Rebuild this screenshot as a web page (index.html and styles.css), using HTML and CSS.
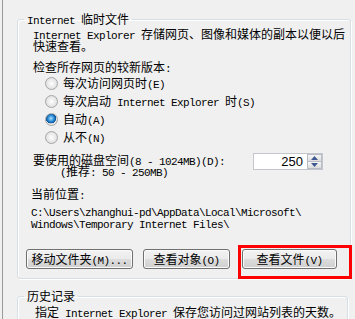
FILE: index.html
```html
<!DOCTYPE html>
<html lang="zh-CN">
<head>
    <meta charset="UTF-8">
    <title>Internet 临时文件</title>
    <link rel="stylesheet" href="styles.css">
</head>
<body>
<div class="window">

    <fieldset class="group group-cache">
        <legend><span class="en">Internet </span>临时文件</legend>

        <p class="desc"><span class="en">Internet Explorer </span>存储网页、图像和媒体的副本以便以后快速查看。</p>

        <p class="check-label">检查所存网页的较新版本<span class="en">:</span></p>

        <div class="radio-list">
            <label class="radio-row"><input type="radio" name="check"><span>每次访问网页时<span class="en">(E)</span></span></label>
            <label class="radio-row"><input type="radio" name="check"><span>每次启动<span class="en"> Internet Explorer </span>时<span class="en">(S)</span></span></label>
            <label class="radio-row"><input type="radio" name="check" checked><span>自动<span class="en">(A)</span></span></label>
            <label class="radio-row"><input type="radio" name="check"><span>从不<span class="en">(N)</span></span></label>
        </div>

        <div class="disk-row">
            <div class="disk-label">
                <div>要使用的磁盘空间<span class="en">(8 - 1024MB)(D):</span></div>
                <div class="disk-hint"><span class="en">(</span>推荐<span class="en">: 50 - 250MB)</span></div>
            </div>
            <div class="spin">
                <span class="spin-value">250</span>
                <div class="spin-btns">
                    <span class="spin-btn"><svg width="7" height="4" viewBox="0 0 7 4"><path d="M0 4 L3.5 0 L7 4 Z" fill="#3d5a95"/></svg></span>
                    <span class="spin-btn"><svg width="7" height="4" viewBox="0 0 7 4"><path d="M0 0 L7 0 L3.5 4 Z" fill="#3d5a95"/></svg></span>
                </div>
            </div>
        </div>

        <p class="location-label">当前位置<span class="en">:</span></p>
        <p class="location-path"><span class="en">C:\Users\zhanghui-pd\AppData\Local\Microsoft\<br>Windows\Temporary Internet Files\</span></p>

        <div class="button-row">
            <button class="win-btn btn-move">移动文件夹<span class="en">(M)...</span></button>
            <button class="win-btn btn-objects">查看对象<span class="en">(O)</span></button>
            <span class="highlight">
                <button class="win-btn btn-files">查看文件<span class="en">(V)</span></button>
            </span>
        </div>
    </fieldset>

    <fieldset class="group group-history">
        <legend>历史记录</legend>
        <p class="desc">指定<span class="en"> Internet Explorer </span>保存您访问过网站列表的天数。</p>
    </fieldset>

</div>
</body>
</html>
```

FILE: styles.css
```css
html, body {
    margin: 0;
    background-color: #f0f0f0;
}

body {
    width: 355px;
    height: 319px;
    overflow: hidden;
    padding-left: 2px;
    box-sizing: border-box;
    font-family: "Noto Sans CJK SC", "Liberation Sans", sans-serif;
    font-size: 12px;
    line-height: 12px;
    color: #000000;
}

p {
    margin: 0;
}

/* latin runs are half width, like the dialog font;
   line-height 0 keeps them from stretching the line box */
.en {
    font-family: "Liberation Mono", "DejaVu Sans Mono", monospace;
    font-size: 11px;
    letter-spacing: -0.6px;
    line-height: 0;
}

.window {
    border-left: 1px solid #9a9a9a;
    height: 100%;
    padding: 13px 0 0 14px;
    box-sizing: border-box;
}

/* Group boxes */
.group {
    margin: 0;
    border: 1px solid #d5dfe5;
    border-radius: 3px;
    box-shadow: inset 1px 1px 0 #ffffff, 1px 1px 0 #ffffff;
    padding: 3px 0 9px 6px;
    min-width: 0;
}

.group legend {
    padding: 0 3px;
    line-height: 12px;
}

.group-cache {
    width: 334px;
    box-sizing: border-box;
}

.group-history {
    width: 331px;
    box-sizing: border-box;
    margin-top: 11px;
    padding-top: 4px;
}

.desc {
    margin-left: 9px;
    width: 316px;
}

.group-history .desc {
    margin-left: 11px;
    white-space: nowrap;
}

.check-label {
    margin: 9px 0 0 9px;
}

/* Radios */
.radio-list {
    margin: 1px 0 0 21px;
}

.radio-row {
    display: flex;
    align-items: center;
    height: 18px;
    white-space: pre;
}

.radio-row input {
    appearance: none;
    width: 13px;
    height: 13px;
    margin: 0 5px 0 0;
    border: 1px solid #a4a6a8;
    border-radius: 50%;
    background: radial-gradient(circle at 50% 50%, #ffffff 0%, #ececec 45%, #d4d4d4 100%);
    box-sizing: border-box;
    flex-shrink: 0;
}

.radio-row input:checked {
    background:
        radial-gradient(circle at 45% 40%, #a8e0ff 0%, #2a8ad4 35%, #0b4f94 55%, transparent 58%),
        radial-gradient(circle at 50% 50%, #ffffff 0%, #ececec 45%, #d4d4d4 100%);
}

/* Disk space */
.disk-row {
    display: flex;
    align-items: flex-start;
    margin: 8px 0 0 9px;
}

.disk-label {
    width: 220px;
    white-space: nowrap;
}

.disk-hint {
    padding-left: 27px;
    margin-top: -1px;
}

.spin {
    display: flex;
    align-items: center;
    justify-content: flex-end;
    width: 70px;
    height: 17px;
    margin-top: -1px;
    border: 1px solid #c3c6cc;
    background-color: #ffffff;
    box-sizing: border-box;
}

.spin-value {
    font-family: "Liberation Sans", sans-serif;
    font-size: 13px;
    padding-right: 4px;
}

.spin-btns {
    display: flex;
    flex-direction: column;
    width: 15px;
    height: 15px;
}

.spin-btn {
    flex: 1;
    display: flex;
    align-items: center;
    justify-content: center;
    border: 1px solid #b8bcc4;
    background: linear-gradient(#f7f7f7, #dcdcdc);
}

.spin-btn + .spin-btn {
    border-top: none;
}

/* Location */
.location-label {
    margin: 11px 0 0 7px;
}

.location-path {
    margin: 5px 0 0 7px;
    white-space: nowrap;
}

/* Buttons */
.button-row {
    display: flex;
    margin: 20px 0 0 2px;
}

.win-btn {
    height: 20px;
    padding: 0;
    border: 1px solid #707070;
    border-radius: 3px;
    background: linear-gradient(#f2f2f2 0%, #ebebeb 50%, #dddddd 51%, #cfcfcf 100%);
    box-shadow: inset 0 0 0 1px #fbfbfb;
    font-family: inherit;
    font-size: 12px;
    line-height: 12px;
    color: #000000;
}

.btn-move {
    width: 107px;
}

.btn-objects {
    width: 87px;
    margin-left: 10px;
}

.highlight {
    position: relative;
    display: flex;
    margin-left: 12px;
}

.btn-files {
    width: 95px;
}

/* red annotation frame */
.highlight::after {
    content: "";
    position: absolute;
    left: -4px;
    top: -4px;
    width: 114px;
    height: 34px;
    border: 3px solid #ff0000;
    box-sizing: border-box;
}
```
